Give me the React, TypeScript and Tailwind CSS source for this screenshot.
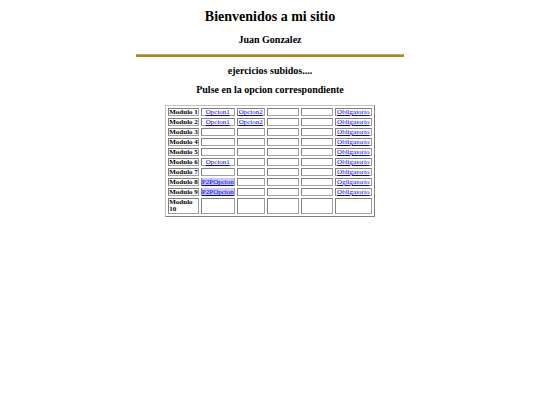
import React from "react";

const rows: { name: string; c1?: string; c2?: string; ob?: string; p2p?: boolean }[] = [
  { name: "Modulo 1", c1: "Opcion1", c2: "Opcion2", ob: "Obligatorio" },
  { name: "Modulo 2", c1: "Opcion1", c2: "Opcion2", ob: "Obligatorio" },
  { name: "Modulo 3", ob: "Obligatorio" },
  { name: "Modulo 4", ob: "Obligatorio" },
  { name: "Modulo 5", ob: "Obligatorio" },
  { name: "Modulo 6", c1: "Opcion1", ob: "Obligatorio" },
  { name: "Modulo 7", ob: "Obligatorio" },
  { name: "Modulo 8", c1: "P2POpcion", p2p: true, ob: "Ogligatorio" },
  { name: "Modulo 9", c1: "P2POpcion", p2p: true, ob: "Obligatorio" },
];

const td = "border border-[#a0a0a0] border-t-[#808080] border-l-[#808080] p-0 text-center align-middle";

export default function App() {
  return (
    <div className="w-[540px] h-[405px] bg-white text-black" style={{ fontFamily: '"Liberation Serif", "Times New Roman", serif' }}>
      <div className="flex flex-col items-center pt-[8px]">
        <h1 className="text-[14px] leading-[18px] font-bold">Bienvenidos a mi sitio</h1>
        <h3 className="mt-[7px] text-[10px] leading-[13px] font-bold">Juan Gonzalez</h3>
        <div className="mt-[8px] w-[268px] h-[3px] bg-[#a8882a] border-t border-[#c8a850]"></div>
        <h2 className="mt-[7px] text-[10px] leading-[14px] font-bold">ejercicios subidos....</h2>
        <h2 className="mt-[5px] text-[10px] leading-[14px] font-bold">Pulse en la opcion correspondiente</h2>
        <table className="mt-[8px] border-separate border-spacing-[2px] border border-[#808080] border-t-[#c0c0c0] border-l-[#c0c0c0] text-[7px] leading-[6px]">
          <tbody>
            {rows.map((r) => (
              <tr key={r.name}>
                <td className={td + " text-left font-bold w-[30px] h-[8px] whitespace-nowrap"}>{r.name}</td>
                <td className={td + " w-[29px]"}>
                  {r.c1 ? (
                    <a className={"underline text-[#0000ee] whitespace-nowrap " + (r.p2p ? "bg-[#c8c8ff]" : "")}>{r.c1}</a>
                  ) : null}
                </td>
                <td className={td + " w-[28px]"}>
                  {r.c2 ? <a className="underline text-[#0000ee]">{r.c2}</a> : null}
                </td>
                <td className={td + " w-[32px]"}></td>
                <td className={td + " w-[32px]"}></td>
                <td className={td + " w-[37px]"}>
                  {r.ob ? <a className="underline text-[#0000ee]">{r.ob}</a> : null}
                </td>
              </tr>
            ))}
            <tr>
              <td className={td + " text-left font-bold h-[16px] leading-[7px]"}>
                Modulo
                <br />
                10
              </td>
              <td className={td}></td>
              <td className={td}></td>
              <td className={td}></td>
              <td className={td}></td>
              <td className={td}></td>
            </tr>
          </tbody>
        </table>
      </div>
    </div>
  );
}
